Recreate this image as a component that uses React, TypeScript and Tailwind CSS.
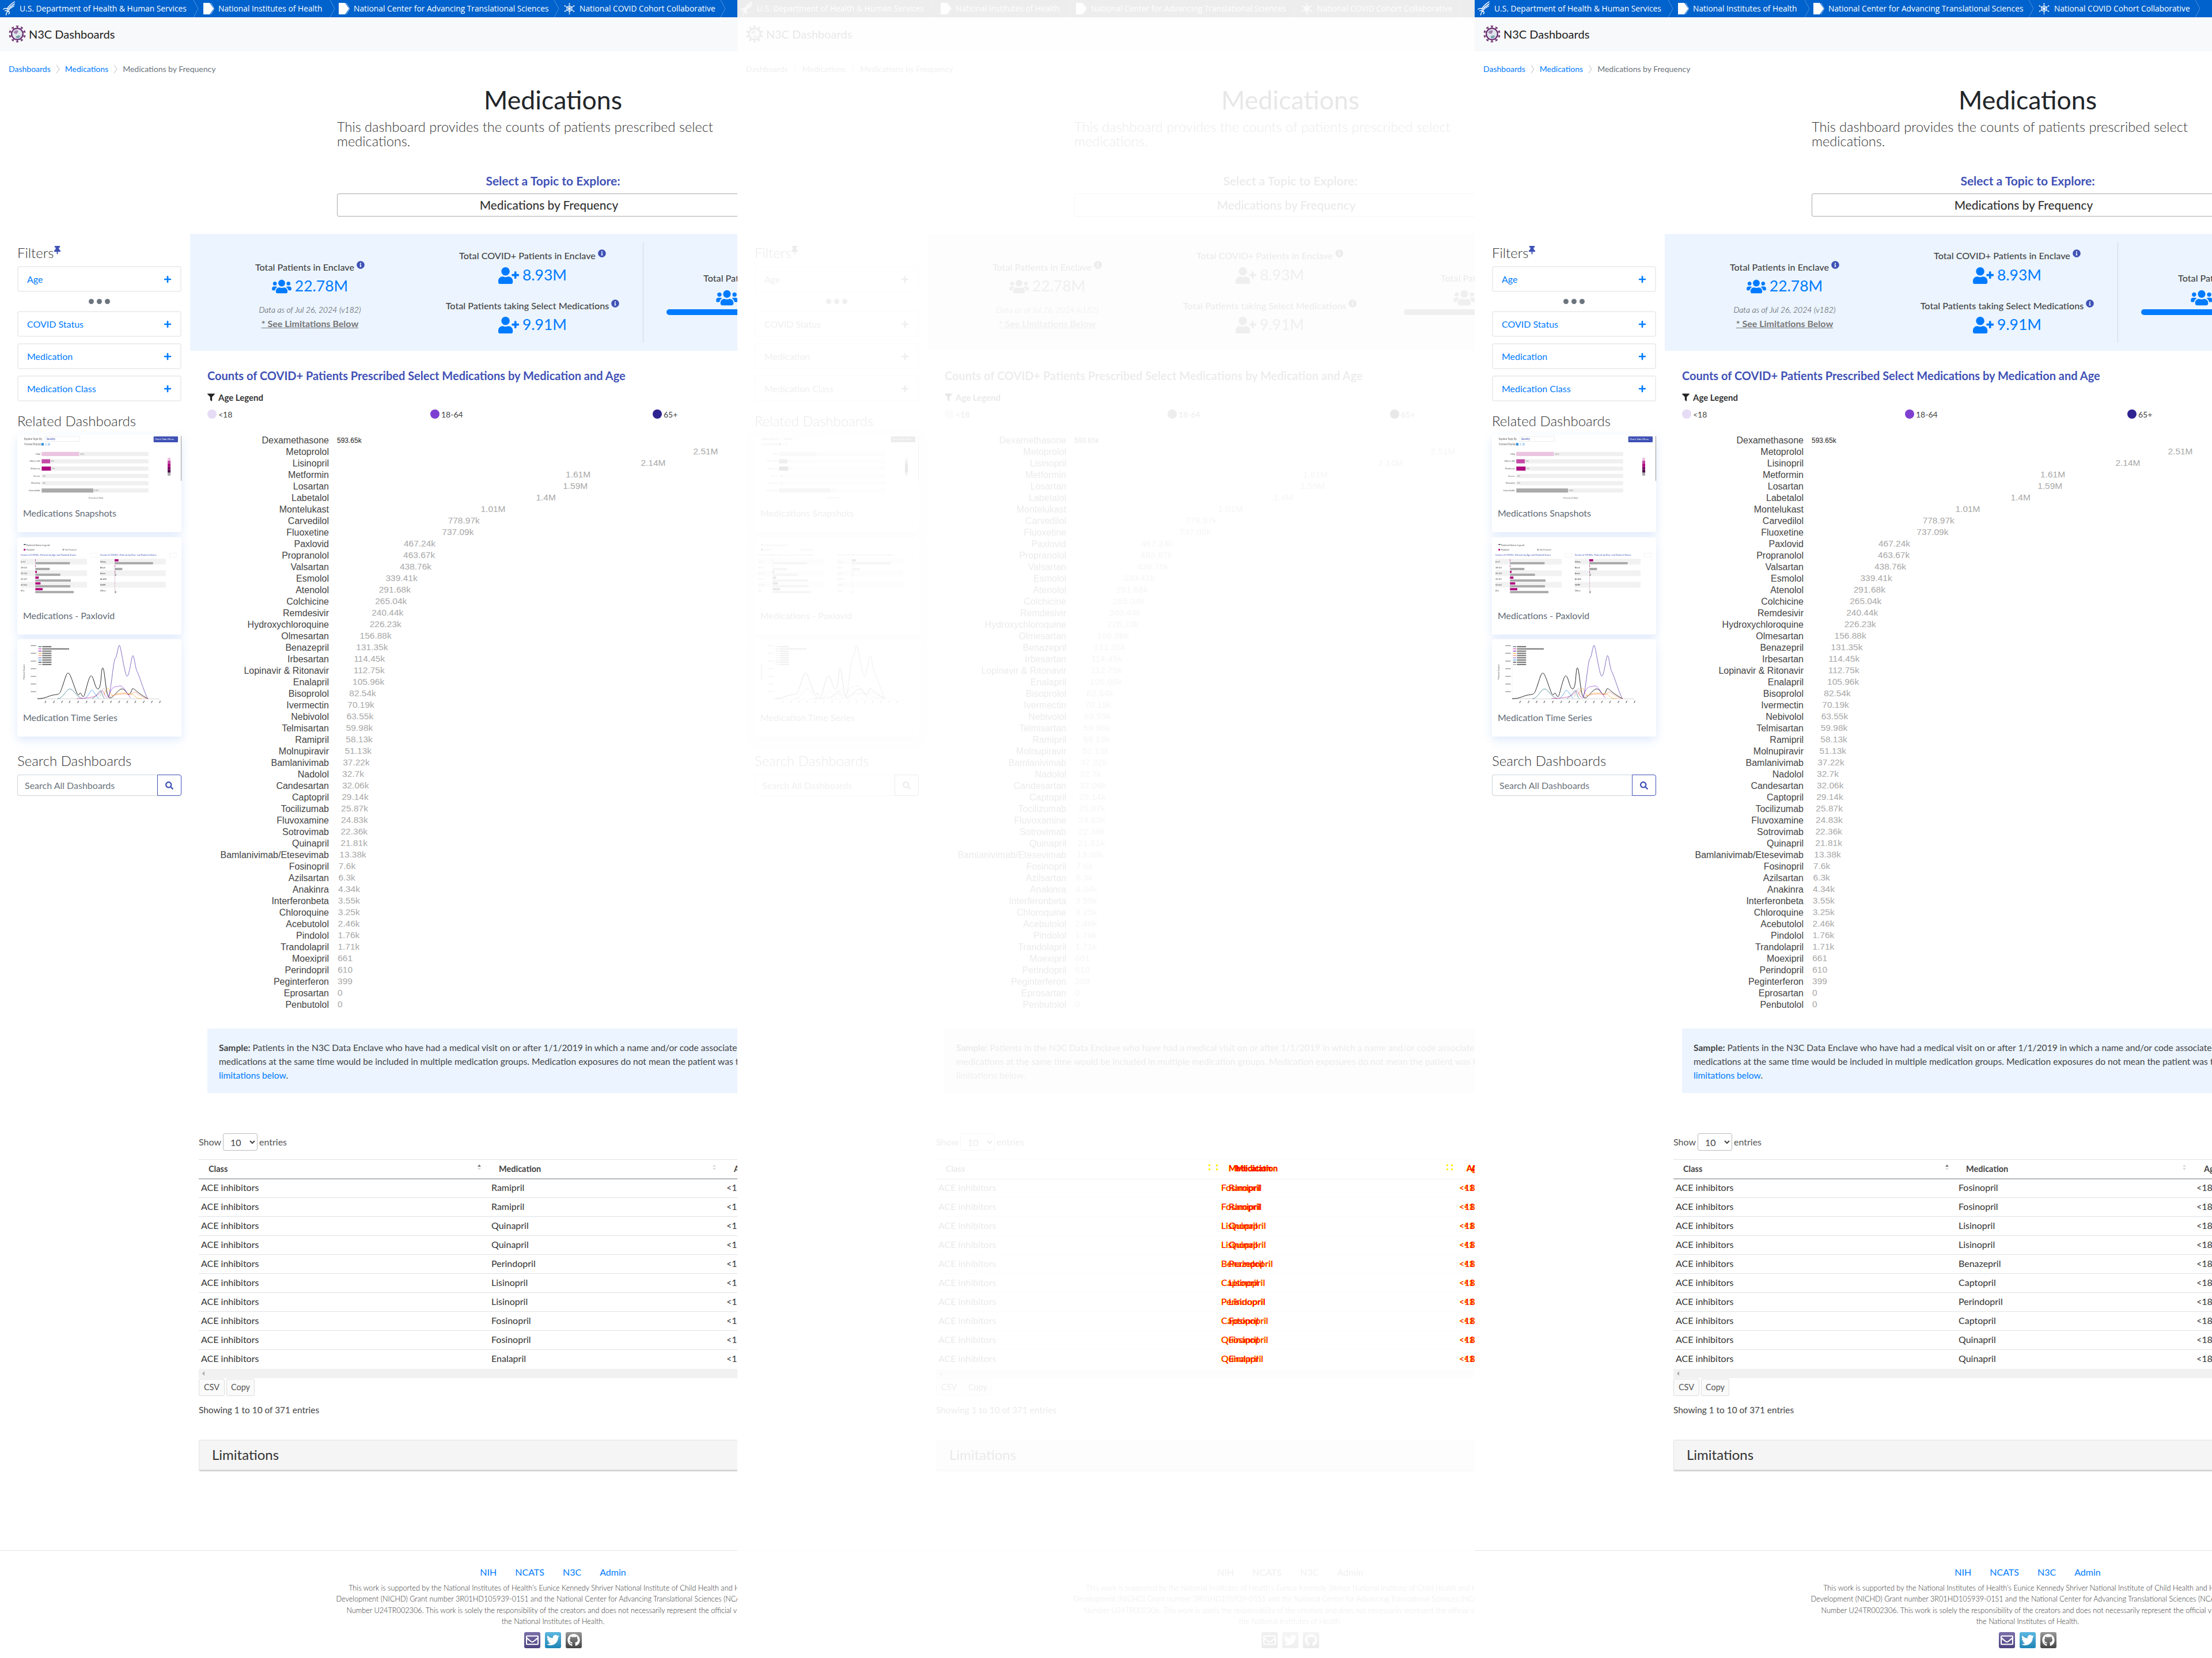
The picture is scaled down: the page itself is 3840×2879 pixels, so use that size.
import React from "react";
import { FaUsers, FaUserPlus, FaInfoCircle, FaPlus, FaThumbtack, FaFilter, FaSearch, FaRegEnvelope, FaTwitter, FaGithub } from "react-icons/fa";

const CHART: [string, string, number][] = [
  ["Dexamethasone", "593.65k", -1], ["Metoprolol", "2.51M", 2.51], ["Lisinopril", "2.14M", 2.14], ["Metformin", "1.61M", 1.61],
  ["Losartan", "1.59M", 1.59], ["Labetalol", "1.4M", 1.4], ["Montelukast", "1.01M", 1.01], ["Carvedilol", "778.97k", 0.77897],
  ["Fluoxetine", "737.09k", 0.73709], ["Paxlovid", "467.24k", 0.46724], ["Propranolol", "463.67k", 0.46367], ["Valsartan", "438.76k", 0.43876],
  ["Esmolol", "339.41k", 0.33941], ["Atenolol", "291.68k", 0.29168], ["Colchicine", "265.04k", 0.26504], ["Remdesivir", "240.44k", 0.24044],
  ["Hydroxychloroquine", "226.23k", 0.22623], ["Olmesartan", "156.88k", 0.15688], ["Benazepril", "131.35k", 0.13135], ["Irbesartan", "114.45k", 0.11445],
  ["Lopinavir & Ritonavir", "112.75k", 0.11275], ["Enalapril", "105.96k", 0.10596], ["Bisoprolol", "82.54k", 0.08254], ["Ivermectin", "70.19k", 0.07019],
  ["Nebivolol", "63.55k", 0.06355], ["Telmisartan", "59.98k", 0.05998], ["Ramipril", "58.13k", 0.05813], ["Molnupiravir", "51.13k", 0.05113],
  ["Bamlanivimab", "37.22k", 0.03722], ["Nadolol", "32.7k", 0.0327], ["Candesartan", "32.06k", 0.03206], ["Captopril", "29.14k", 0.02914],
  ["Tocilizumab", "25.87k", 0.02587], ["Fluvoxamine", "24.83k", 0.02483], ["Sotrovimab", "22.36k", 0.02236], ["Quinapril", "21.81k", 0.02181],
  ["Bamlanivimab/Etesevimab", "13.38k", 0.01338], ["Fosinopril", "7.6k", 0.0076], ["Azilsartan", "6.3k", 0.0063], ["Anakinra", "4.34k", 0.00434],
  ["Interferonbeta", "3.55k", 0.00355], ["Chloroquine", "3.25k", 0.00325], ["Acebutolol", "2.46k", 0.00246], ["Pindolol", "1.76k", 0.00176],
  ["Trandolapril", "1.71k", 0.00171], ["Moexipril", "661", 0.00066], ["Perindopril", "610", 0.00061], ["Peginterferon", "399", 0.0004],
  ["Eprosartan", "0", 0], ["Penbutolol", "0", 0],
];

const LEFT_MEDS = ["Ramipril", "Ramipril", "Quinapril", "Quinapril", "Perindopril", "Lisinopril", "Lisinopril", "Fosinopril", "Fosinopril", "Enalapril"];
const RIGHT_MEDS = ["Fosinopril", "Fosinopril", "Lisinopril", "Lisinopril", "Benazepril", "Captopril", "Perindopril", "Captopril", "Quinapril", "Quinapril"];

function Eagle() {
  return (
    <svg viewBox="0 0 24 28" className="w-[22px] h-[26px] shrink-0" fill="none" stroke="#fff" strokeWidth="1.6" strokeLinecap="round">
      <path d="M22 1C17 4 12 8 8 14" />
      <path d="M22 5C17 8 13 11 9 16" />
      <path d="M21 9C17 11 13 14 10 18" />
      <path d="M1 15c3-2 6-2 8 0" />
      <path d="M4 18c3-1 5 0 6 2" />
      <path d="M9 18c-1 3-3 5-3 8" />
      <path d="M11 19c2 1 2 3 0 5" />
    </svg>
  );
}
function Chevron() {
  return (
    <svg viewBox="0 0 10 30" className="w-[10px] h-[30px] shrink-0 block" fill="none" stroke="#4d91de" strokeWidth="1">
      <path d="M1 0l8 15-8 15" />
    </svg>
  );
}
function DocIcon() {
  return (
    <svg viewBox="0 0 20 24" className="w-[20px] h-[24px] shrink-0 block">
      <path d="M1 2h11l7 10-7 10H1z" fill="#fff" />
      <path d="M14 2l6 10-6 10" fill="none" stroke="#9fc4ee" strokeWidth="1" />
    </svg>
  );
}
function Snow() {
  return (
    <svg viewBox="0 0 24 24" className="w-[21px] h-[24px] shrink-0 block" fill="none" stroke="#fff" strokeWidth="2" strokeDasharray="3 1">
      <path d="M12 1v22M2 6l20 12M22 6L2 18" />
      <circle cx="12" cy="12" r="5" strokeDasharray="none" strokeWidth="1.5" />
    </svg>
  );
}
function Virus() {
  const a = [0, 36, 72, 108, 144, 180, 216, 252, 288, 324];
  return (
    <svg viewBox="0 0 32 32" className="w-[30px] h-[30px] shrink-0">
      {a.map((d) => (
        <g key={d} transform={`rotate(${d} 16 16)`}>
          <rect x="15" y="1.5" width="2" height="5" fill="#6c2f72" />
          <rect x="13.5" y="0.5" width="5" height="2" rx="1" fill="#6c2f72" />
        </g>
      ))}
      <circle cx="16" cy="16" r="10.5" fill="#dfe6ea" stroke="#6c2f72" strokeWidth="2.4" />
      <path d="M9 13c3-4 6-5 9-3l-2 5-3 1z" fill="#a57fb0" />
      <path d="M13 21c3-3 7-3 9-1l-3 4h-4z" fill="#7ea3ae" />
    </svg>
  );
}
function Crumb() {
  return (
    <svg viewBox="0 0 7 16" className="w-[7px] h-[16px] mx-[9px] mt-[2px] shrink-0" fill="none" stroke="#bbbbbb" strokeWidth="1">
      <path d="M1 1l5 7-5 7" />
    </svg>
  );
}

function Top() {
  return (
    <div className="flex items-center h-[30px] bg-[#0062cc] pl-[5px] text-white text-[13.8px] font-medium whitespace-nowrap font-['Open_Sans','Liberation_Sans',sans-serif]">
      <Eagle />
      <span className="ml-[7px] w-[294px]">U.S. Department of Health &amp; Human Services</span>
      <span className="ml-[7px]"><Chevron /></span>
      <span className="ml-[7px]"><DocIcon /></span>
      <span className="ml-[7px] w-[186px]">National Institutes of Health</span>
      <span className="ml-[7px]"><Chevron /></span>
      <span className="ml-[5px]"><DocIcon /></span>
      <span className="ml-[7px] w-[340px]">National Center for Advancing Translational Sciences</span>
      <span className="ml-[7px]"><Chevron /></span>
      <span className="ml-[7px]"><Snow /></span>
      <span className="ml-[7px] w-[237px]">National COVID Cohort Collaborative</span>
      <span className="ml-[7px]"><Chevron /></span>
    </div>
  );
}

function Thumb({ children, box }: { children: React.ReactNode; box: string }) {
  return (
    <svg viewBox={box} preserveAspectRatio="none" className="w-full h-[120px] block blur-[0.4px]" fontFamily="Lato, sans-serif">
      {children}
    </svg>
  );
}

function ThumbSnapshots() {
  const rows: [string, number, string][] = [["Mild", 195, "#ebc4e0"], ["Mild in ED", 44, "#c44aa6"], ["Moderate", 48, "#ae0a7f"], ["Severe", 0, "#fff"], ["Mortality", 0, "#fff"], ["Unavailable", 269, "#aaaaaa"]];
  return (
    <Thumb box="90 67 855 335">
      <text x="125" y="92" fontSize="13" fill="#666">Explore Topic By</text>
      <rect x="235" y="75" width="180" height="25" fill="#fff" stroke="#ccc" />
      <text x="242" y="93" fontSize="13" fill="#3f51b5">Severity</text>
      <text x="125" y="118" fontSize="13" fill="#666">Choose Display:</text>
      <rect x="216" y="107" width="12" height="12" fill="#2a8fe0" />
      <rect x="234" y="107" width="10" height="12" fill="#cfe3f7" />
      <rect x="250" y="107" width="10" height="12" fill="#a8d0f2" />
      <rect x="800" y="75" width="127" height="28" fill="#3f51b5" rx="3" />
      <text x="808" y="93" fontSize="12" fill="#fff">Chart/Table Filters</text>
      <rect x="942" y="67" width="3" height="223" fill="#999" />
      {rows.map(([t, w, c], i) => {
        const y = 150 + i * 35.4;
        return (
          <g key={t}>
            <rect x="217" y={y} width="556" height="20" fill="#f0f0f0" />
            <rect x="217" y={y} width={w} height="20" fill={c} />
            <text x="210" y={y + 14} fontSize="12" textAnchor="end" fill="#555">{t}</text>
            <text x={221 + w} y={y + 14} fontSize="12" fill="#999">{w ? `${Math.round(w / 5.56)}%` : "0%"}</text>
          </g>
        );
      })}
      {["#ebc4e0", "#c44aa6", "#ae0a7f", "#7a0a6a", "#4d0a45", "#aaaaaa"].map((c, i) => (
        <rect key={c} x="873" y={178 + i * 14.5} width="15" height="14.5" fill={c} />
      ))}
      <text x="500" y="378" fontSize="11" textAnchor="middle" fill="#666">Percent of Total</text>
    </Thumb>
  );
}

function ThumbPaxlovid() {
  const lp = [2, 2, 8, 18, 27, 38];
  const lg = [180, 75, 130, 185, 182, 200];
  const rp = [20, 2, 2, 1, 1, 1];
  const rg = [200, 40, 8, 2, 2, 8];
  const lab = ["0-17", "18-24", "25-34", "35-49", "50-64", "65+"];
  const lab2 = ["White", "Black", "Asian", "AI/AN", "NHPI", "Other"];
  return (
    <Thumb box="90 566 855 335">
      <rect x="124" y="599" width="10" height="4" fill="#222" />
      <text x="138" y="609" fontSize="12" fill="#444">Paxlovid Status Legend</text>
      <circle cx="128" cy="626" r="5" fill="#ae0a7f" />
      <text x="138" y="630" fontSize="11" fill="#444">Paxlovid</text>
      <circle cx="330" cy="626" r="5" fill="#aaa" />
      <text x="340" y="630" fontSize="11" fill="#666">No Paxlovid</text>
      <text x="108" y="654" fontSize="12" fill="#3f51b5">Counts of COVID+ Patients by Age and Paxlovid Status</text>
      <text x="521" y="654" fontSize="12" fill="#3f51b5">Counts of COVID+ Patients by Race and Paxlovid Status</text>
      <rect x="471" y="642" width="36" height="20" fill="#fff" stroke="#ddd" />
      <rect x="883" y="642" width="36" height="20" fill="#fff" stroke="#ddd" />
      {lp.map((p, i) => {
        const y = 670 + i * 28;
        return (
          <g key={i}>
            {i % 2 === 0 && <rect x="108" y={y} width="345" height="28" fill="#f2f2f2" />}
            {i % 2 === 0 && <rect x="521" y={y} width="343" height="28" fill="#f2f2f2" />}
            <text x="108" y={y + 18} fontSize="12" fill="#444">{lab[i]}</text>
            <text x="521" y={y + 18} fontSize="12" fill="#444">{lab2[i]}</text>
            <rect x="184" y={y + 2} width={p} height="11" fill="#ae0a7f" />
            <rect x="184" y={y + 16} width={lg[i]} height="11" fill="#aaa" />
            <rect x="597" y={y + 2} width={rp[i]} height="11" fill="#ae0a7f" />
            <rect x="597" y={y + 16} width={rg[i]} height="11" fill="#aaa" />
          </g>
        );
      })}
    </Thumb>
  );
}

function ThumbSeries() {
  const legend = ["#0f3d55", "#c020a0", "#6a0dad", "#ffa726", "#ff8a65", "#7b55c7", "#1e88e5", "#000", "#888"];
  return (
    <Thumb box="90 1061 855 335">
      <path d="M195 1350H830" stroke="#888" strokeWidth="1" fill="none" />
      <path d="M195 1090V1350" stroke="#ddd" strokeWidth="1" fill="none" />
      {[1090, 1127, 1165, 1202, 1239, 1276, 1313].map((y) => <rect key={y} x="160" y={y} width="28" height="4" fill="#999" />)}
      {legend.map((c, i) => (
        <g key={c}>
          <path d={`M200 ${1097 + i * 10.8}h16`} stroke={c} strokeWidth="3" />
          <rect x="220" y={1094 + i * 10.8} width={i === 1 ? 140 : 48} height="6" fill="#777" />
        </g>
      ))}
      <text x="128" y="1220" fontSize="12" fill="#444" transform="rotate(-90 128 1220)" textAnchor="middle">Patient Count</text>
      <path d="M195 1349C240 1349 250 1335 280 1331S310 1330 325 1290S345 1225 355 1225S375 1260 395 1310S410 1302 425 1330S440 1320 462 1258S490 1302 510 1302S525 1200 535 1200S550 1320 565 1340S600 1320 625 1305S660 1332 672 1328S685 1300 692 1300S720 1325 770 1349" stroke="#000" strokeWidth="2.5" fill="none" />
      <path d="M300 1349C330 1349 345 1300 365 1302S395 1340 430 1349" stroke="#1a6a80" strokeWidth="2" fill="none" />
      <path d="M440 1349C460 1340 470 1308 478 1308S505 1345 515 1349" stroke="#1e88e5" strokeWidth="2" fill="none" />
      <path d="M480 1349C500 1340 515 1315 522 1310S535 1345 545 1349" stroke="#1a6a80" strokeWidth="2" fill="none" />
      <path d="M400 1349C430 1345 500 1350 520 1320S540 1340 560 1345" stroke="#c020a0" strokeWidth="1.8" fill="none" />
      <path d="M520 1340C535 1290 540 1300 548 1305S555 1345 570 1330" stroke="#aaa" strokeWidth="2" fill="none" />
      <path d="M540 1330C555 1300 560 1295 565 1300S575 1345 600 1330S660 1325 680 1325S700 1349 740 1349" stroke="#ffa726" strokeWidth="2" fill="none" />
      <path d="M565 1340C585 1280 600 1295 620 1288S650 1310 680 1345" stroke="#8a2be2" strokeWidth="2" fill="none" />
      <path d="M570 1340C600 1325 620 1330 640 1326S680 1340 692 1322S730 1345 770 1349" stroke="#ff8a65" strokeWidth="2" fill="none" />
      <path d="M565 1345C580 1300 590 1165 600 1155S615 1090 622 1090S650 1240 662 1240S685 1140 692 1140S705 1205 715 1220S755 1330 770 1349" stroke="#5c3db0" strokeWidth="2.2" fill="none" />
      {[236, 280, 322, 362, 406, 450, 492, 534, 577, 620, 662, 704, 748, 790, 832].map((x) => <rect key={x} x={x} y="1358" width="4" height="12" fill="#777" transform={`rotate(30 ${x} 1362)`} />)}
    </Thumb>
  );
}

function Related({ title, children }: { title: string; children: React.ReactNode }) {
  return (
    <div className="h-[169px] bg-white rounded-[4px] shadow-[0_6px_16px_rgba(80,140,240,0.18)] overflow-hidden">
      {children}
      <div className="mt-[6px] pl-[10px] text-[16px] leading-[20px] text-[#5f6a75]">{title}</div>
    </div>
  );
}

function FilterCard({ label }: { label: string }) {
  return (
    <div className="h-[45px] flex items-center justify-between pl-[15px] pr-[15px] bg-white border-2 border-[#eeeeee] rounded-[4px] text-[16px] text-[#007bff]">
      <span>{label}</span>
      <FaPlus className="w-[14px] h-[14px]" />
    </div>
  );
}

function Sidebar() {
  return (
    <div className="w-[330px] shrink-0 pl-[30px] pr-[15px] pt-[18px]">
      <div className="flex items-start h-[30px] text-[24px] leading-[30px] font-light text-[#333]">
        Filters<FaThumbtack className="w-[13px] h-[15px] mt-[3px] text-[#3f51b5]" />
      </div>
      <div className="mt-[8px] flex flex-col">
        <FilterCard label="Age" />
        <div className="h-[33px] flex items-center justify-center gap-[5px]">
          <span className="w-[9px] h-[9px] rounded-full bg-[#6c757d]" />
          <span className="w-[9px] h-[9px] rounded-full bg-[#6c757d]" />
          <span className="w-[9px] h-[9px] rounded-full bg-[#6c757d]" />
        </div>
        <div className="flex flex-col gap-[11px]">
          <FilterCard label="COVID Status" />
          <FilterCard label="Medication" />
          <FilterCard label="Medication Class" />
        </div>
      </div>
      <div className="mt-[19px] h-[30px] text-[24px] leading-[30px] font-light text-[#333]">Related Dashboards</div>
      <div className="mt-[9px] flex flex-col gap-[8.5px]">
        <Related title="Medications Snapshots"><ThumbSnapshots /></Related>
        <Related title="Medications - Paxlovid"><ThumbPaxlovid /></Related>
        <Related title="Medication Time Series"><ThumbSeries /></Related>
      </div>
      <div className="mt-[27px] h-[30px] text-[24px] leading-[30px] font-light text-[#333]">Search Dashboards</div>
      <div className="mt-[9px] flex h-[37px]">
        <div className="flex-1 flex items-center pl-[12px] border border-[#ced4da] border-r-0 rounded-l-[4px] text-[16px] text-[#6c757d]">Search All Dashboards</div>
        <div className="w-[42px] flex items-center justify-center border border-[#3f51b5] rounded-r-[4px] text-[#3f51b5]"><FaSearch className="w-[14px] h-[14px]" /></div>
      </div>
    </div>
  );
}

function Info() {
  return <FaInfoCircle className="w-[14px] h-[14px] ml-[4px] -mt-[8px] shrink-0 text-[#3f51b5]" />;
}
function StatLabel({ children }: { children: React.ReactNode }) {
  return <div className="flex items-center justify-center h-[20px] text-[16.2px] leading-[20px] font-medium text-[#444] whitespace-nowrap"><span>{children}</span><Info /></div>;
}
function StatValue({ icon, children }: { icon: React.ReactNode; children: React.ReactNode }) {
  return (
    <div className="flex items-center justify-center gap-[6px] text-[26.5px] h-[36px] text-[#007bff]">
      {icon}<span>{children}</span>
    </div>
  );
}

function Stats() {
  return (
    <div className="h-[203px] bg-[#ebf4ff] flex relative">
      <div className="w-[381px] pl-[35px] pt-[48px] flex flex-col">
        <StatLabel>Total Patients in Enclave</StatLabel>
        <div className="mt-[5px]"><StatValue icon={<FaUsers className="w-[34px] h-[27px]" />}>22.78M</StatValue></div>
        <div className="mt-[14px] text-[14px] leading-[18px] italic font-light text-center text-[#333]">Data as of Jul 26, 2024 (v182)</div>
        <div className="mt-[5px] text-[16px] leading-[20px] font-bold text-center text-[#777] underline">* See Limitations Below</div>
      </div>
      <div className="w-[406px] mt-[15px] h-[174px] border-r border-[#cfd8e3] pt-[13px] pl-[22px] flex flex-col">
        <StatLabel>Total COVID+ Patients in Enclave</StatLabel>
        <div className="mt-[6px]"><StatValue icon={<FaUserPlus className="w-[36px] h-[29px]" />}>8.93M</StatValue></div>
        <div className="mt-[25px]"><StatLabel>Total Patients taking Select Medications</StatLabel></div>
        <div className="mt-[5px]"><StatValue icon={<FaUserPlus className="w-[36px] h-[29px]" />}>9.91M</StatValue></div>
      </div>
      <div className="flex-1 pl-[40px] pt-[67px]">
        <div className="pl-[64px] h-[20px] text-[16.2px] leading-[20px] font-medium text-[#444] whitespace-nowrap">Total Patients</div>
        <div className="pl-[85px] mt-[9px] h-[30px] text-[#007bff]"><FaUsers className="w-[40px] h-[30px]" /></div>
        <div className="mt-[5px] w-[400px] h-[10px] bg-[#007bff] rounded-[5px]" />
      </div>
    </div>
  );
}

function Chart() {
  return (
    <div className="mt-[28px] font-['Liberation_Sans',sans-serif]">
      {CHART.map(([name, val, m]) => (
        <div key={name} className="flex h-[20px] items-center">
          <div className="w-[211px] text-right text-[16px] leading-[20px] text-[#444] whitespace-nowrap">{name}</div>
          {m < 0 ? (
            <div className="ml-[14px] text-[12px] text-[#222]">{val}</div>
          ) : (
            <div className="text-[15.5px] leading-[20px] text-[#a8a8a8] -mt-[3px]" style={{ marginLeft: 15 + m * 246 }}>{val}</div>
          )}
        </div>
      ))}
    </div>
  );
}

function Sort({ first, left }: { first?: boolean; left: string }) {
  return (
    <span className={`absolute top-[8px] flex flex-col gap-[2px] ${left}`}>
      <span className={`w-0 h-0 border-x-[3px] border-x-transparent border-b-[4px] ${first ? "border-b-[#777]" : "border-b-[#ddd]"}`} />
      <span className="w-0 h-0 border-x-[3px] border-x-transparent border-t-[4px] border-t-[#ddd]" />
    </span>
  );
}

function DataTable({ meds, right }: { meds: string[]; right?: boolean }) {
  return (
    <div>
      <table className="table-fixed w-[1000px] border-collapse text-[16px] text-[#333]">
        <colgroup>
          <col className={right ? "w-[491px]" : "w-[504px]"} />
          <col className={right ? "w-[413px]" : "w-[408px]"} />
          <col />
        </colgroup>
        <thead>
          <tr className="h-[33px] border-t border-[#dee2e6] border-b-2 border-b-[#b5b9bd] text-[14.5px] font-bold text-[#444] text-left">
            <th className="pl-[17px] font-bold relative">Class<Sort first left={right ? "left-[472px]" : "left-[484px]"} /></th>
            <th className="pl-[17px] font-bold relative">Medication<Sort left={right ? "left-[393px]" : "left-[388px]"} /></th>
            <th className="pl-[17px] font-bold">Age</th>
          </tr>
        </thead>
        <tbody>
          {meds.map((m, i) => (
            <tr key={i} className={`h-[33px] ${i < 9 ? "border-b border-[#dee2e6]" : ""}`}>
              <td className="pl-[4px] pb-[2px]">ACE inhibitors</td>
              <td className="pl-[4px] pb-[2px]">{m}</td>
              <td className="pl-[4px] pb-[2px]">&lt;18</td>
            </tr>
          ))}
        </tbody>
      </table>
      <div className="h-[16px] bg-[#f1f1f1] flex items-center pl-[6px] w-[1000px]">
        <span className="w-0 h-0 border-y-[4px] border-y-transparent border-r-[4px] border-r-[#aaa]" />
      </div>
    </div>
  );
}

function Main({ meds, right }: { meds: string[]; right?: boolean }) {
  return (
    <div className="flex-1 min-w-0">
      <Stats />
      <div className="pl-[30px]">
        <div className="mt-[31px] text-[20px] leading-[24px] font-bold text-[#3f51b5] whitespace-nowrap">
          Counts of COVID+ Patients Prescribed Select Medications by Medication and Age
        </div>
        <div className="mt-[16px] flex items-center h-[20px] text-[15px] font-bold text-[#333]">
          <FaFilter className="w-[13px] h-[14px] mr-[6px] text-[#222]" />Age Legend
        </div>
        <div className="mt-[11px] flex h-[16px] items-center text-[14px] text-[#444]">
          <div className="w-[387px] flex items-center gap-[3px]"><span className="w-[16px] h-[16px] rounded-full bg-[#e6dcf5]" />&lt;18</div>
          <div className="w-[386px] flex items-center gap-[3px]"><span className="w-[16px] h-[16px] rounded-full bg-[#7e3fd1]" />18-64</div>
          <div className="flex items-center gap-[3px]"><span className="w-[16px] h-[16px] rounded-full bg-[#2e2390]" />65+</div>
        </div>
        <Chart />
        <div className="mt-[31px] h-[112px] w-[1530px] bg-[#ebf4ff] pl-[20px] pt-[21px] text-[15.6px] leading-[24px] text-[#444] whitespace-nowrap">
          <b className="font-bold">Sample:</b> Patients in the N3C Data Enclave who have had a medical visit on or after 1/1/2019 in which a name and/or code associated with a selected medication was recorded. Patients on multiple<br />
          medications at the same time would be included in multiple medication groups. Medication exposures do not mean the patient was taking the medication for COVID-19. See<br />
          <span className="text-[#007bff]">limitations below</span>.
        </div>
      </div>
      <div className="pl-[15px]">
        <div className="mt-[70px] flex items-center h-[30px] text-[16px] text-[#555]">
          Show
          <select defaultValue="10" className="mx-[3px] w-[60px] h-[30px] pl-[8px] border border-[#bbb] rounded-[3px] bg-white text-[16px] text-[#444]">
            <option value="10">10</option>
          </select>
          entries
        </div>
        <div className="mt-[15px]"><DataTable meds={meds} right={right} /></div>
        <div className="mt-[1px] flex gap-[3px] h-[30px] text-[14.5px] text-[#555]">
          <div className="w-[45px] flex items-center justify-center bg-[#fafafa] border border-[#ddd] rounded-[3px]">CSV</div>
          <div className="w-[49px] flex items-center justify-center bg-[#fafafa] border border-[#ddd] rounded-[3px]">Copy</div>
        </div>
        <div className="mt-[14px] h-[20px] text-[15.4px] leading-[20px] text-[#444]">Showing 1 to 10 of 371 entries</div>
        <div className="mt-[42px] h-[55px] w-[1530px] flex items-center pl-[22px] bg-[#f5f5f5] border border-[#e3e3e3] border-b-[3px] border-b-[#d5d5d5] rounded-l-[3px] text-[24px] text-[#333]">Limitations</div>
      </div>
    </div>
  );
}

function Footer() {
  return (
    <div className="mt-[137px] border-t border-[#e5e5e5] pt-[25px] pb-[17px] flex flex-col items-center">
      <div className="flex items-center h-[24px] text-[16px] text-[#007bff] gap-[32px]">
        <span>NIH</span><span>NCATS</span><span>N3C</span><span>Admin</span>
      </div>
      <div className="mt-[6px] text-center text-[12.7px] leading-[19.5px] font-light text-[#333] whitespace-nowrap">
        This work is supported by the National Institutes of Health's Eunice Kennedy Shriver National Institute of Child Health and Human<br />
        Development (NICHD) Grant number 3R01HD105939-01S1 and the National Center for Advancing Translational Sciences (NCATS) Grant<br />
        Number U24TR002306. This work is solely the responsibility of the creators and does not necessarily represent the official views of<br />
        the National Institutes of Health.
      </div>
      <div className="mt-[8px] flex gap-[8px]">
        <span className="w-[28px] h-[28px] rounded-[3px] flex items-center justify-center bg-gradient-to-b from-[#7a6fa8] to-[#4d427f] text-white"><FaRegEnvelope className="w-[22px] h-[22px]" /></span>
        <span className="w-[28px] h-[28px] rounded-[3px] flex items-center justify-center bg-gradient-to-b from-[#5cb8e0] to-[#1c85b5] text-white"><FaTwitter className="w-[22px] h-[22px]" /></span>
        <span className="w-[28px] h-[28px] rounded-[3px] flex items-center justify-center bg-gradient-to-b from-[#9a9a9a] to-[#444] text-white"><FaGithub className="w-[22px] h-[22px]" /></span>
      </div>
    </div>
  );
}

function Page({ meds, right }: { meds: string[]; right?: boolean }) {
  return (
    <div className="w-[1920px] bg-white font-['Lato','Liberation_Sans',sans-serif] text-[#212529]">
      <Top />
      <div className="h-[59px] bg-[#f8f9fa] flex items-center pl-[15px] pb-[2px] gap-[5px] text-[20px] text-[#222]">
        <Virus />N3C Dashboards
      </div>
      <div className="h-[55px] pt-[21px] pl-[15px] flex items-start text-[14px] leading-[20px] text-[#007bff]">
        <span>Dashboards</span><Crumb /><span>Medications</span><Crumb /><span className="text-[#6c757d]">Medications by Frequency</span>
      </div>
      <div className="w-[750px] mx-auto">
        <div className="h-[58px] text-center text-[44.6px] leading-[58px] text-[#212529]">Medications</div>
        <div className="mt-[6px] text-[23.6px] leading-[25px] font-light text-[#333]">This dashboard provides the counts of patients prescribed select medications.</div>
        <div className="mt-[44px] text-center text-[21px] leading-[24px] font-bold text-[#3f51b5]">Select a Topic to Explore:</div>
        <div className="mt-[10px] h-[40px] border border-[#aaa] rounded-[3px] flex items-center justify-center pr-[14px] text-[20.8px] font-medium text-[#333]">Medications by Frequency</div>
      </div>
      <div className="mt-[30px] flex">
        <Sidebar />
        <Main meds={meds} right={right} />
      </div>
      <Footer />
    </div>
  );
}

function DiffText({ items, size }: { items: [string, string][]; size: string }) {
  return (
    <>
      {items.map(([t, left], i) => (
        <span key={`y${i}`} className={`absolute top-0 leading-[33px] -translate-x-[1px] whitespace-nowrap text-[#ffff00] ${size} ${left}`}>{t}</span>
      ))}
      {items.map(([t, left], i) => (
        <span key={`r${i}`} className={`absolute top-0 leading-[33px] whitespace-nowrap text-[#ff0000] ${size} ${left}`}>{t}</span>
      ))}
    </>
  );
}

function DiffOverlay() {
  const y = "w-[3px] h-[3px] bg-[#ffee00]";
  return (
    <div className="absolute left-[0px] top-[2012px] w-[1280px] h-[363px] overflow-hidden font-['Lato',sans-serif]">
      <div className="relative h-[33px] font-bold">
        <DiffText size="text-[14.5px]" items={[["Medication", "left-[865px]"], ["Medication", "left-[853px]"], ["Age", "left-[1274px]"], ["Age", "left-[1266px]"]]} />
        <span className={`absolute top-[10px] left-[818px] ${y}`} /><span className={`absolute top-[10px] left-[831px] ${y}`} />
        <span className={`absolute top-[17px] left-[818px] ${y}`} /><span className={`absolute top-[17px] left-[831px] ${y}`} />
        <span className={`absolute top-[10px] left-[1231px] ${y}`} /><span className={`absolute top-[10px] left-[1239px] ${y}`} />
        <span className={`absolute top-[17px] left-[1231px] ${y}`} /><span className={`absolute top-[17px] left-[1239px] ${y}`} />
      </div>
      {LEFT_MEDS.map((m, i) => (
        <div key={i} className="relative h-[33px]">
          <DiffText size="text-[16px]" items={[[m, "left-[853px]"], [RIGHT_MEDS[i], "left-[840px]"], ["<18", "left-[1261px]"], ["<18", "left-[1253px]"]]} />
        </div>
      ))}
    </div>
  );
}

function Panel({ children }: { children: React.ReactNode }) {
  return <div className="relative w-[1280px] h-[2879px] overflow-hidden shrink-0 bg-white">{children}</div>;
}

export default function App() {
  return (
    <div className="flex w-[3840px] h-[2879px] overflow-hidden bg-white">
      <Panel><Page meds={LEFT_MEDS} /></Panel>
      <Panel>
        <div className="opacity-10 grayscale"><Page meds={LEFT_MEDS} /></div>
        <DiffOverlay />
      </Panel>
      <Panel><Page meds={RIGHT_MEDS} right /></Panel>
    </div>
  );
}
